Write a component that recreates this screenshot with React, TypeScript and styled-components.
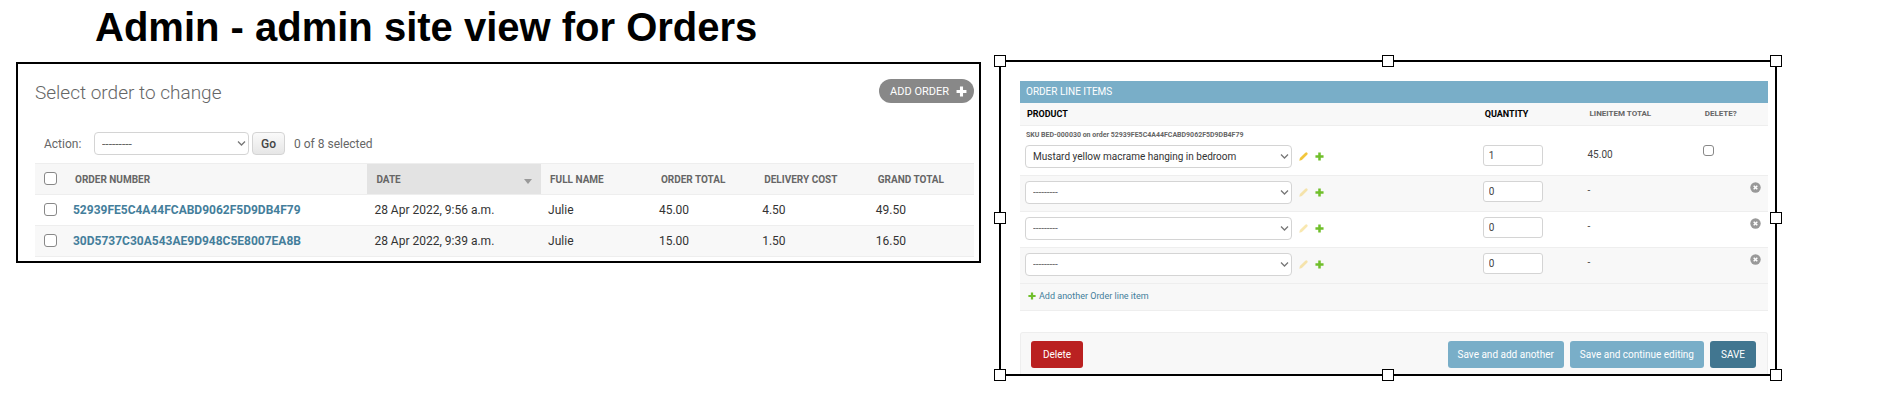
import React from "react";
import styled, { createGlobalStyle, css } from "styled-components";

const GlobalStyle = createGlobalStyle`
  * { box-sizing: border-box; }
  body { margin: 0; background: #fff; color: #333; font-family: Roboto, "Liberation Sans", sans-serif; }
  button, input, select { font-family: inherit; }
`;

const Page = styled.main`
  padding: 0 113px 32px 16px;
`;

const Title = styled.h1`
  margin: 0;
  padding: 4px 0 0 79px;
  color: #000;
  font: 700 40px/46px "Liberation Sans", Arial, sans-serif;
`;

const Panels = styled.div`
  display: grid;
  grid-template-columns: 965fr 778fr;
  align-items: start;
  gap: 18px;
  padding-top: 10px;
`;

const ListPanel = styled.section`
  margin-top: 2px;
  padding: 15px 5px 4px 17px;
  border: 2px solid #000;
`;

const ListHeader = styled.header`
  display: flex;
  justify-content: space-between;
  align-items: flex-start;
`;

const ListTitle = styled.h2`
  margin: 0;
  padding-top: 2px;
  color: #666;
  font-size: 19px;
  line-height: 24px;
  font-weight: 300;
`;

const AddOrder = styled.button`
  display: flex;
  align-items: center;
  gap: 7px;
  height: 24px;
  padding: 0 7px 0 11px;
  border: 0;
  border-radius: 12px;
  background: #888;
  color: #fff;
  font-size: 11px;
`;

const ActionBar = styled.form`
  display: flex;
  align-items: center;
  padding: 27px 0 8px 9px;
  color: #666;
  font-size: 12px;
  line-height: 16px;
`;

const ActionLabel = styled.label`
  width: 50px;
`;

const SelectWrap = styled.div<{ $width: number }>`
  position: relative;
  width: ${(p) => p.$width}px;
`;

const SelectBox = styled.select<{ $muted?: boolean; $size: number }>`
  display: block;
  width: 100%;
  height: 23px;
  padding: 0 20px 0 7px;
  border: 1px solid #d4d4d4;
  border-radius: 4px;
  background: #fff;
  color: ${(p) => (p.$muted ? "#666" : "#333")};
  font-size: ${(p) => p.$size}px;
  appearance: none;
`;

const Chevron = styled.svg`
  position: absolute;
  top: 8px;
  right: 3px;
  pointer-events: none;
`;

const GoButton = styled.button`
  width: 33px;
  height: 23px;
  margin: 0 9px 0 3px;
  padding: 0;
  border: 1px solid #d4d4d4;
  border-radius: 4px;
  background: linear-gradient(#fafafa, #e6e6e6);
  color: #444;
  font-size: 12px;
  font-weight: 500;
`;

const Table = styled.table`
  width: 100%;
  border-collapse: collapse;
  table-layout: fixed;
`;

const OrderTh = styled.th<{ $sorted?: boolean }>`
  height: 31px;
  padding: 0 9px;
  border-top: 1px solid #eee;
  border-bottom: 1px solid #eee;
  background: ${(p) => (p.$sorted ? "#e3e3e3" : "#f7f7f7")};
  color: #666;
  font-size: 10px;
  font-weight: 700;
  text-align: left;
  white-space: nowrap;
`;

const SortLabel = styled.span`
  display: flex;
  align-items: center;
  justify-content: space-between;
`;

const SortArrow = styled.svg`
  margin-top: 5px;
`;

const OrderRow = styled.tr`
  height: 31px;
  border-bottom: 1px solid #eee;
  &:nth-child(even) { background: #f8f8f8; }
`;

const OrderTd = styled.td`
  padding: 0 7px;
  color: #333;
  font-size: 12px;
  white-space: nowrap;
`;

const PickTd = styled(OrderTd)`
  padding: 0 9px;
`;

const OrderLink = styled.a`
  color: #447e9b;
  font-weight: 700;
  text-decoration: none;
`;

const Tick = styled.input<{ $size: number }>`
  display: block;
  width: ${(p) => p.$size}px;
  height: ${(p) => p.$size}px;
  margin: 0 0 2px;
  border: 1px solid #888;
  border-radius: 3px;
  background: #fff;
  appearance: none;
  &:checked { background: #447e9b; }
`;

const InlinePanel = styled.section`
  position: relative;
  padding: 19px 7px 0 19px;
  border: 2px solid #000;
`;

const at = { start: "-7px", middle: "calc(50% - 6px)", end: "calc(100% - 5px)" };
type Spot = keyof typeof at;

const Handle = styled.span<{ $x: Spot; $y: Spot }>`
  position: absolute;
  left: ${(p) => at[p.$x]};
  top: ${(p) => at[p.$y]};
  width: 12px;
  height: 12px;
  border: 1px solid #000;
  background: #fff;
`;

const GroupTitle = styled.h2`
  margin: 0;
  padding: 0 6px;
  background: #79aec8;
  color: #fff;
  font-size: 10px;
  line-height: 22px;
  font-weight: 400;
`;

const ItemTh = styled.th<{ $required?: boolean }>`
  height: 22px;
  padding: 0 7px;
  background: #f8f8f8;
  color: ${(p) => (p.$required ? "#000" : "#666")};
  font-size: ${(p) => (p.$required ? 9 : 8)}px;
  font-weight: 700;
  text-align: left;
  white-space: nowrap;
`;

const ItemRow = styled.tr`
  border-top: 1px solid #eee;
  &:nth-child(even) { background: #f8f8f8; }
`;

const ItemTd = styled.td<{ $saved?: boolean }>`
  padding: ${(p) => (p.$saved ? "19px" : "5px")} 5px 7px;
  color: #444;
  font-size: 10px;
  line-height: 20px;
  vertical-align: top;
`;

const ProductTd = styled(ItemTd)`
  padding-top: 5px;
`;

const Sku = styled.p`
  margin: 0;
  height: 14px;
  padding-left: 1px;
  color: #666;
  font-size: 7px;
  line-height: 8px;
  font-weight: 700;
`;

const ProductField = styled.div`
  display: flex;
  align-items: center;
  gap: 7px;
`;

const Quantity = styled.input`
  display: block;
  width: 60px;
  height: 21px;
  padding: 0 5px;
  border: 1px solid #d4d4d4;
  border-radius: 3px;
  background: #fff;
  color: #444;
  font-size: 10px;
`;

const IconButton = styled.button`
  display: block;
  padding: 0;
  border: 0;
  background: none;
  line-height: 0;
  &:disabled { opacity: 0.4; }
`;

const RemoveButton = styled(IconButton)`
  margin: 1px 2px 0 auto;
`;

const AddRow = styled.div`
  padding: 0 8px;
  border-top: 1px solid #eee;
  border-bottom: 1px solid #eee;
  background: #f8f8f8;
  font-size: 9px;
  line-height: 25px;
`;

const AddLink = styled.a`
  display: inline-flex;
  align-items: center;
  gap: 3px;
  color: #447e9b;
  text-decoration: none;
`;

const SubmitRow = styled.footer`
  display: flex;
  align-items: flex-start;
  gap: 6px;
  margin-top: 21px;
  padding: 8px 11px 6px 10px;
  border: 1px solid #eee;
  border-bottom: 0;
  border-radius: 3px 3px 0 0;
  background: #f8f8f8;
`;

const tones = {
  danger: css`min-width: 52px; margin-right: auto; background: #ba2121;`,
  soft: css`background: #79aec8;`,
  primary: css`min-width: 46px; background: #417690;`,
};

const ActionButton = styled.button<{ $tone: keyof typeof tones }>`
  height: 27px;
  padding: 0 10px;
  border: 0;
  border-radius: 3px;
  color: #fff;
  font-size: 10px;
  ${(p) => tones[p.$tone]}
`;

const Plus = ({ size, color }: { size: number; color: string }) => (
  <svg width={size} height={size} viewBox="0 0 10 10" aria-hidden="true">
    <path d="M3.6 0.5h2.8v3.1h3.1v2.8H6.4v3.1H3.6V6.4H0.5V3.6h3.1z" fill={color} />
  </svg>
);

const Pencil = () => (
  <svg width="9" height="9" viewBox="0 0 9 9" aria-hidden="true">
    <path d="M0.3 8.7l0.6-2.6L6.3 0.8a1.2 1.2 0 0 1 1.9 1.9L2.9 8.1z" fill="#efb80b" opacity="0.8" />
  </svg>
);

const Cross = () => (
  <svg width="11" height="11" viewBox="0 0 11 11" aria-hidden="true">
    <circle cx="5.5" cy="5.5" r="5.2" fill="#999" />
    <path d="M3.7 3.7l3.6 3.6M7.3 3.7L3.7 7.3" stroke="#fff" strokeWidth="1.5" />
  </svg>
);

type DropProps = { id?: string; label?: string; width: number; size: number; value?: string };

const Drop = ({ id, label, width, size, value }: DropProps) => (
  <SelectWrap $width={width}>
    <SelectBox id={id} aria-label={label} $muted={!value} $size={size}>
      <option>{value ?? "---------"}</option>
    </SelectBox>
    <Chevron width="9" height="7" viewBox="0 0 9 7" aria-hidden="true">
      <path d="M1 1.5l3.5 3.5L8 1.5" fill="none" stroke="#777" strokeWidth="1.3" />
    </Chevron>
  </SelectWrap>
);

const orders = [
  { number: "52939FE5C4A44FCABD9062F5D9DB4F79", date: "28 Apr 2022, 9:56 a.m.", name: "Julie", total: "45.00", delivery: "4.50", grand: "49.50" },
  { number: "30D5737C30A543AE9D948C5E8007EA8B", date: "28 Apr 2022, 9:39 a.m.", name: "Julie", total: "15.00", delivery: "1.50", grand: "16.50" },
];

const items = [
  { sku: "SKU BED-000030 on order 52939FE5C4A44FCABD9062F5D9DB4F79", product: "Mustard yellow macrame hanging in bedroom", quantity: 1, total: "45.00" },
  { quantity: 0, total: "-" },
  { quantity: 0, total: "-" },
  { quantity: 0, total: "-" },
];

const handles: [Spot, Spot][] = [
  ["start", "start"], ["middle", "start"], ["end", "start"],
  ["start", "middle"], ["end", "middle"],
  ["start", "end"], ["middle", "end"], ["end", "end"],
];

const Columns = ({ widths }: { widths: string[] }) => (
  <colgroup>
    {widths.map((width, i) => <col key={i} style={{ width }} />)}
  </colgroup>
);

const OrderList = () => (
  <ListPanel>
    <ListHeader>
      <ListTitle>Select order to change</ListTitle>
      <AddOrder type="button">ADD ORDER <Plus size={11} color="#fff" /></AddOrder>
    </ListHeader>
    <ActionBar>
      <ActionLabel htmlFor="action">Action:</ActionLabel>
      <Drop id="action" width={155} size={12} />
      <GoButton type="button">Go</GoButton>
      <span>0 of 8 selected</span>
    </ActionBar>
    <Table>
      <Columns widths={["3.3%", "32.1%", "18.5%", "11.8%", "11%", "12.1%", "11.2%"]} />
      <thead>
        <tr>
          <OrderTh><Tick type="checkbox" $size={13} aria-label="Select all orders" /></OrderTh>
          <OrderTh>ORDER NUMBER</OrderTh>
          <OrderTh $sorted>
            <SortLabel>
              DATE
              <SortArrow width="8" height="5" viewBox="0 0 8 5" aria-hidden="true"><path d="M0 0h8L4 5z" fill="#999" /></SortArrow>
            </SortLabel>
          </OrderTh>
          <OrderTh>FULL NAME</OrderTh>
          <OrderTh>ORDER TOTAL</OrderTh>
          <OrderTh>DELIVERY COST</OrderTh>
          <OrderTh>GRAND TOTAL</OrderTh>
        </tr>
      </thead>
      <tbody>
        {orders.map((o) => (
          <OrderRow key={o.number}>
            <PickTd><Tick type="checkbox" $size={13} aria-label={`Select order ${o.number}`} /></PickTd>
            <OrderTd><OrderLink href="#order">{o.number}</OrderLink></OrderTd>
            <OrderTd>{o.date}</OrderTd>
            <OrderTd>{o.name}</OrderTd>
            <OrderTd>{o.total}</OrderTd>
            <OrderTd>{o.delivery}</OrderTd>
            <OrderTd>{o.grand}</OrderTd>
          </OrderRow>
        ))}
      </tbody>
    </Table>
  </ListPanel>
);

const LineItems = () => (
  <InlinePanel>
    <GroupTitle>ORDER LINE ITEMS</GroupTitle>
    <Table>
      <Columns widths={["61.2%", "14%", "15.4%", "9.4%"]} />
      <thead>
        <tr>
          <ItemTh $required>PRODUCT</ItemTh>
          <ItemTh $required>QUANTITY</ItemTh>
          <ItemTh>LINEITEM TOTAL</ItemTh>
          <ItemTh>DELETE?</ItemTh>
        </tr>
      </thead>
      <tbody>
        {items.map((item, i) => (
          <ItemRow key={i}>
            <ProductTd>
              {item.sku && <Sku>{item.sku}</Sku>}
              <ProductField>
                <Drop label="Product" width={267} size={10} value={item.product} />
                <IconButton type="button" aria-label="Change product" disabled={!item.product}><Pencil /></IconButton>
                <IconButton type="button" aria-label="Add product"><Plus size={9} color="#70bf2b" /></IconButton>
              </ProductField>
            </ProductTd>
            <ItemTd $saved={!!item.sku}><Quantity aria-label="Quantity" defaultValue={item.quantity} /></ItemTd>
            <ItemTd $saved={!!item.sku}>{item.total}</ItemTd>
            <ItemTd $saved={!!item.sku}>
              {item.sku
                ? <Tick type="checkbox" $size={11} aria-label="Delete this item" />
                : <RemoveButton type="button" aria-label="Remove row"><Cross /></RemoveButton>}
            </ItemTd>
          </ItemRow>
        ))}
      </tbody>
    </Table>
    <AddRow>
      <AddLink href="#add"><Plus size={8} color="#70bf2b" />Add another Order line item</AddLink>
    </AddRow>
    <SubmitRow>
      <ActionButton type="button" $tone="danger">Delete</ActionButton>
      <ActionButton type="button" $tone="soft">Save and add another</ActionButton>
      <ActionButton type="button" $tone="soft">Save and continue editing</ActionButton>
      <ActionButton type="button" $tone="primary">SAVE</ActionButton>
    </SubmitRow>
    {handles.map(([x, y]) => <Handle key={x + y} $x={x} $y={y} />)}
  </InlinePanel>
);

export default function App() {
  return (
    <Page>
      <GlobalStyle />
      <Title>Admin - admin site view for Orders</Title>
      <Panels>
        <OrderList />
        <LineItems />
      </Panels>
    </Page>
  );
}
